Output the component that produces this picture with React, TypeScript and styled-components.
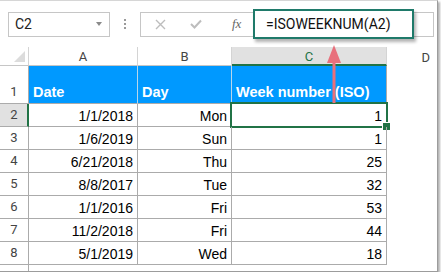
import React from "react";
import styled, { createGlobalStyle } from "styled-components";

const Global = createGlobalStyle`
  html, body { margin: 0; padding: 0; background: #fff; }
  * { box-sizing: border-box; }
`;

const GREEN = "#217346";
const LINE = "#ababab";
const HEAD_LINE = "#d4d4d4";
const BLUE = "#0099ff";

const Frame = styled.div`
  position: relative;
  width: 438px;
  height: 272px;
  overflow: hidden;
  background: #fff;
  border-top: 1px solid #d6d6d6;
  border-right: 1px solid #9c9c9c;
  border-bottom: 1px solid #9c9c9c;
  box-shadow: 2px 2px 2px rgba(0, 0, 0, 0.3);
  font-family: "Liberation Sans", Arial, sans-serif;
`;

const Toolbar = styled.div`
  height: 46px;
  display: flex;
  align-items: center;
  padding-left: 8px;
`;

const NameBox = styled.div`
  width: 102px;
  height: 25px;
  border: 1px solid #c6c6c6;
  display: flex;
  align-items: center;
  justify-content: space-between;
  padding: 0 7px 0 6px;
  font-family: Roboto, sans-serif;
  font-size: 14px;
  color: #222;
`;

const Caret = styled.span`
  width: 0;
  height: 0;
  border-left: 3.5px solid transparent;
  border-right: 3.5px solid transparent;
  border-top: 4px solid #8a8a8a;
`;

const Dots = styled.div`
  width: 30px;
  display: flex;
  flex-direction: column;
  align-items: center;
  gap: 2px;
  & > span {
    width: 2px;
    height: 2px;
    background: #9a9a9a;
  }
`;

const FormulaBox = styled.div`
  width: 294px;
  height: 25px;
  border: 1px solid #c6c6c6;
  display: flex;
  align-items: center;
`;

const IconSlot = styled.span<{ $w: number }>`
  width: ${(p) => p.$w}px;
  display: flex;
  justify-content: center;
  align-items: center;
`;

const Fx = styled.span`
  width: 40px;
  padding-left: 19px;
  font-family: "Liberation Serif", serif;
  font-style: italic;
  font-size: 13px;
  color: #666;
`;

const Input = styled.div`
  width: 161px;
  height: 30px;
  border: 2px solid #1f7a6a;
  background: #fff;
  box-shadow: 2px 3px 3px rgba(0, 0, 0, 0.3);
  display: flex;
  align-items: center;
  padding-left: 11px;
  font-family: Roboto, sans-serif;
  font-size: 14px;
  color: #111;
`;

const Sheet = styled.div`
  display: grid;
  grid-template-columns: 29px 109px 94px 155px 1fr;
  grid-template-rows: 19px 38px repeat(7, 23px) 23px;
`;

const Corner = styled.div`
  position: relative;
  border-right: 1px solid ${HEAD_LINE};
  border-bottom: 1px solid #c6c6c6;
  &::after {
    content: "";
    position: absolute;
    right: 3px;
    bottom: 3px;
    width: 0;
    height: 0;
    border-left: 11px solid transparent;
    border-bottom: 11px solid #dcdcdc;
  }
`;

const ColHead = styled.div<{ $active?: boolean; $last?: boolean }>`
  display: flex;
  align-items: center;
  justify-content: center;
  font-family: Roboto, sans-serif;
  font-size: 13px;
  color: ${(p) => (p.$active ? GREEN : "#444")};
  background: ${(p) => (p.$active ? "#e1e1e1" : "#fff")};
  border-right: ${(p) => (p.$last ? "none" : `1px solid ${HEAD_LINE}`)};
  border-bottom: ${(p) => (p.$active ? `2px solid ${GREEN}` : p.$last ? "none" : `1px solid #c6c6c6`)};
  padding-top: 1px;
  ${(p) => (p.$last ? "justify-content: flex-end; padding-right: 7px;" : "")}
`;

const RowHead = styled.div<{ $active?: boolean }>`
  display: flex;
  align-items: flex-end;
  justify-content: center;
  padding-bottom: 3px;
  font-family: Roboto, sans-serif;
  font-size: 13px;
  line-height: 16px;
  color: #444;
  background: ${(p) => (p.$active ? "#e1e1e1" : "#fff")};
  border-right: ${(p) => (p.$active ? `2px solid ${GREEN}` : `1px solid ${LINE}`)};
  border-bottom: 1px solid ${LINE};
  padding-left: ${(p) => (p.$active ? "1px" : "0")};
`;

const HeadCell = styled.div<{ $last?: boolean }>`
  display: flex;
  align-items: flex-end;
  padding: 0 0 2px 4px;
  background: ${BLUE};
  color: #fff;
  font-weight: bold;
  font-size: 14.5px;
  line-height: 17px;
  white-space: nowrap;
  border-right: 1px solid ${(p) => (p.$last ? LINE : "#b9d6ea")};
  border-bottom: 1px solid ${LINE};
`;

const Cell = styled.div`
  position: relative;
  display: flex;
  align-items: flex-end;
  justify-content: flex-end;
  padding: 0 4px 2px 0;
  font-size: 14px;
  line-height: 16px;
  color: #000;
  border-right: 1px solid ${LINE};
  border-bottom: 1px solid ${LINE};
`;

const Blank = styled.div``;

const Selection = styled.div`
  position: absolute;
  left: -2px;
  top: -2px;
  right: -2px;
  bottom: -2px;
  border: 2px solid ${GREEN};
  pointer-events: none;
  &::after {
    content: "";
    position: absolute;
    right: -5px;
    bottom: -5px;
    width: 7px;
    height: 7px;
    background: ${GREEN};
    border: 1px solid #fff;
  }
`;

const Arrow = styled.svg`
  position: absolute;
  left: 326px;
  top: 43px;
`;

const rows: [string, string, string][] = [
  ["1/1/2018", "Mon", "1"],
  ["1/6/2019", "Sun", "1"],
  ["6/21/2018", "Thu", "25"],
  ["8/8/2017", "Tue", "32"],
  ["1/1/2016", "Fri", "53"],
  ["11/2/2018", "Fri", "44"],
  ["5/1/2019", "Wed", "18"],
];

export default function App() {
  return (
    <>
      <Global />
      <Frame>
        <Toolbar>
          <NameBox>
            <span>C2</span>
            <Caret />
          </NameBox>
          <Dots>
            <span />
            <span />
            <span />
          </Dots>
          <FormulaBox>
            <IconSlot $w={38}>
              <svg width="11" height="11" viewBox="0 0 11 11">
                <path d="M1 1 L10 10 M10 1 L1 10" stroke="#bdbdbd" strokeWidth="1.4" />
              </svg>
            </IconSlot>
            <IconSlot $w={34}>
              <svg width="12" height="10" viewBox="0 0 12 10">
                <path d="M1 5 L4.5 8.5 L11 1.5" stroke="#bdbdbd" strokeWidth="2" fill="none" />
              </svg>
            </IconSlot>
            <Fx>fx</Fx>
            <Input>=ISOWEEKNUM(A2)</Input>
          </FormulaBox>
        </Toolbar>
        <Sheet>
          <Corner />
          <ColHead>A</ColHead>
          <ColHead>B</ColHead>
          <ColHead $active>C</ColHead>
          <ColHead $last>D</ColHead>

          <RowHead>1</RowHead>
          <HeadCell>Date</HeadCell>
          <HeadCell>Day</HeadCell>
          <HeadCell $last>Week number (ISO)</HeadCell>
          <Blank />

          {rows.map((r, i) => (
            <React.Fragment key={i}>
              <RowHead $active={i === 0}>{i + 2}</RowHead>
              <Cell>{r[0]}</Cell>
              <Cell>{r[1]}</Cell>
              <Cell>
                {r[2]}
                {i === 0 && <Selection />}
              </Cell>
              <Blank />
            </React.Fragment>
          ))}
          <RowHead>9</RowHead>
        </Sheet>
        <Arrow width="16" height="60" viewBox="0 0 16 60">
          <path d="M8 1 L15 19 L1 19 Z" fill="#e8707c" />
          <rect x="6.5" y="17" width="3" height="42" fill="#e8707c" />
        </Arrow>
      </Frame>
    </>
  );
}
